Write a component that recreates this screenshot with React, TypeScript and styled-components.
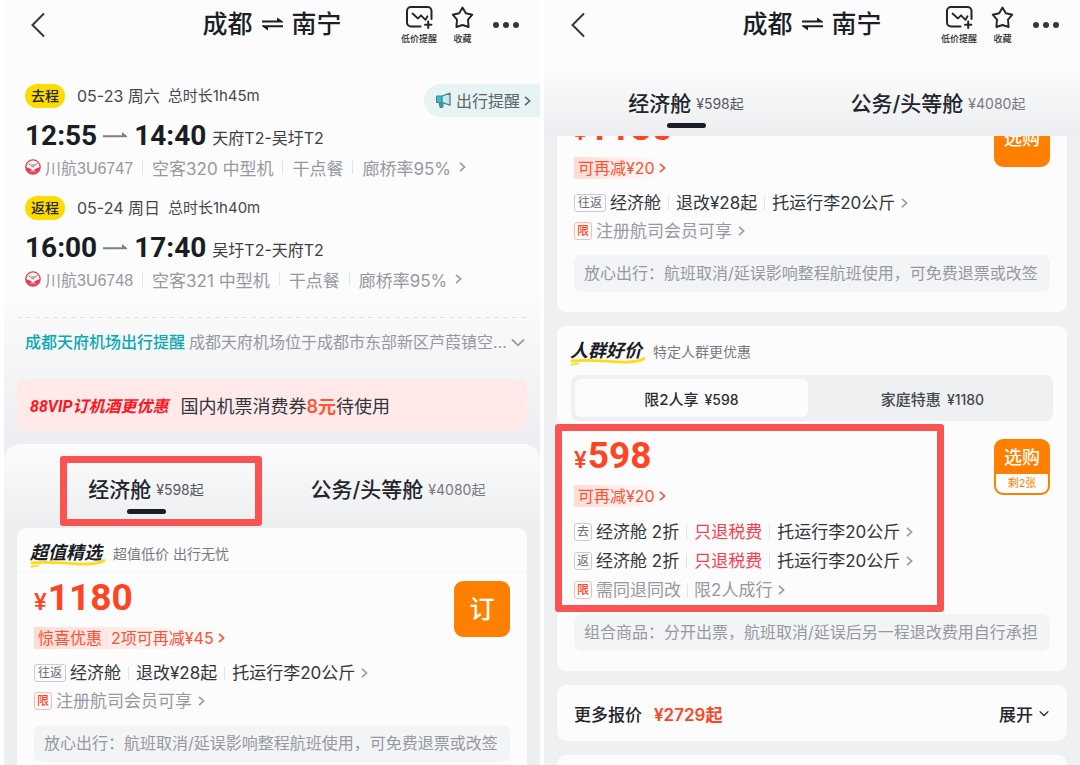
import React from 'react';
import styled, { createGlobalStyle, css } from 'styled-components';

const cjk = '"Noto Sans CJK SC", sans-serif';
const inter = `Inter, ${cjk}`;
const arial = `"Liberation Sans", ${cjk}`;
const roboto = `Roboto, ${cjk}`;

const GlobalStyle = createGlobalStyle`
  *, *::before, *::after { box-sizing: border-box; }
  body { margin: 0; background: #fff; font-family: ${inter}; color: #22252c; }
  button { font: inherit; color: inherit; background: none; border: 0; padding: 0; cursor: pointer; }
  h1, h2, p { margin: 0; font-weight: inherit; }
  svg { display: block; flex: none; }
`;

const Page = styled.main`
  display: grid;
  grid-template-columns: 1fr 1fr;
  height: 100vh;
  overflow: hidden;
`;

const Screen = styled.section<{ $tone: 'detail' | 'list' }>`
  position: relative;
  display: flex;
  flex-direction: column;
  min-width: 0;
  overflow: hidden;
  border-left: 4px solid #fff;
  background: ${(p) =>
    p.$tone === 'detail' ? 'linear-gradient(#fcfcfc 0, #fcfcfc 290px, #eceef1 440px)' : '#eef0f2'};
`;

/* ---------- header ---------- */

const Header = styled.header`
  display: grid;
  grid-template-columns: 1fr auto 1fr;
  align-items: center;
  height: 48px;
  flex: none;
  padding: 0 20px;
`;

const BackButton = styled.button`
  justify-self: start;
  padding: 2px 6px 0;
`;

const Title = styled.h1`
  display: flex;
  align-items: center;
  gap: 9px;
  font-size: 25px;
  line-height: 36px;
  font-weight: 500;
  color: #1c1f28;
`;

const Actions = styled.div`
  display: flex;
  justify-content: flex-end;
  align-items: center;
  gap: 14px;
`;

const MoreButton = styled.button`
  padding: 2px 0 0 4px;
`;

const Action = styled.button`
  display: flex;
  flex-direction: column;
  align-items: center;
  gap: 4px;
  padding-top: 2px;
  font-size: 9px;
  line-height: 12px;
  font-weight: 500;
  color: #2a2d33;
  white-space: nowrap;
`;

/* ---------- flight legs ---------- */

const Legs = styled.div`
  display: flex;
  flex-direction: column;
  gap: 17px;
  padding: 36px 0 26px 21px;
`;

const LegHead = styled.div`
  display: flex;
  align-items: flex-start;
  height: 24px;
  margin-bottom: 9px;
  font-size: 16px;
  line-height: 24px;
  color: #45484e;
`;

const LegTag = styled.span`
  width: 40px;
  margin-right: 12px;
  border-radius: 12px;
  background: #ffdb00;
  color: #22252c;
  font-size: 14px;
  font-weight: 500;
  text-align: center;
`;

const Duration = styled.span`
  margin-left: 8px;
  font-size: 15px;
`;

const RemindPill = styled.button`
  display: flex;
  align-items: center;
  gap: 4px;
  height: 33px;
  margin-left: auto;
  padding: 0 9px 0 11px;
  border-radius: 17px 0 0 17px;
  background: #e6f4f4;
  color: #59666c;
`;

const Times = styled.div`
  display: flex;
  align-items: center;
  height: 36px;
  font-family: ${roboto};
  font-size: 28px;
  font-weight: 700;
  color: #1a1d26;
  svg { margin: 0 6px; }
`;

const Airports = styled.span`
  margin: 4px 0 0 6px;
  font-family: ${inter};
  font-size: 16px;
  font-weight: 400;
  color: #3c3f46;
`;

const LegInfo = styled.button`
  display: flex;
  align-items: center;
  height: 22px;
  margin-top: 3px;
  margin-bottom: 1px;
  font-size: 17px;
  color: #96999f;
  white-space: nowrap;
  svg:last-child { margin-left: 8px; }
`;

const FlightNo = styled.span`
  margin-left: 4px;
  font-family: ${arial};
  font-size: 16px;
`;

const Bar = styled.i<{ $gap?: number }>`
  width: 1px;
  height: 14px;
  margin: 0 ${(p) => p.$gap ?? 8}px;
  background: #e2e4e7;
`;

const Notice = styled.button`
  display: flex;
  align-items: center;
  margin: 0 13px;
  padding: 13px 2px 25px 8px;
  font-size: 16px;
  line-height: 24px;
  color: #96999f;
  white-space: nowrap;
  background: repeating-linear-gradient(90deg, #dfe1e4 0 5px, transparent 5px 9px) top / 100% 1px no-repeat;
  strong { margin-right: 4px; font-weight: 500; color: #0ba9b0; }
  svg { margin-left: auto; }
`;

const Coupon = styled.button`
  display: flex;
  align-items: center;
  gap: 12px;
  height: 52px;
  margin: 0 13px 13px;
  padding: 0 13px;
  border-radius: 8px;
  background: #ffe9e9;
  font-size: 18px;
  color: #33363c;
  em { font-family: ${roboto}; font-size: 16px; font-weight: 700; color: #ff1420; }
  b { color: #ff5533; font-weight: 600; }
`;

/* ---------- cabin tabs ---------- */

const Sheet = styled.div`
  flex: 1;
  min-height: 0;
  border-radius: 16px 16px 0 0;
  background: linear-gradient(#fcfcfc 0, #eceef0 84px);
`;

const Tabs = styled.nav<{ $docked?: boolean }>`
  display: grid;
  grid-template-columns: 1fr 1fr;
  padding: ${(p) => (p.$docked ? '0 16px 8px' : '31px 16px 14px')};
`;

const DockedHead = styled.div`
  flex: none;
  background: linear-gradient(#fcfcfc 0, #fbfbfb 70px, #eceef1 136px);
  ${Tabs} { margin-top: 41px; }
`;

const Tab = styled.button<{ $active?: boolean }>`
  display: flex;
  flex-direction: column;
  align-items: center;
  gap: 4px;
  font-size: 21px;
  font-weight: 500;
  color: #22252c;
  span { display: flex; align-items: center; gap: 5px; height: 30px; line-height: 30px; }
  small { font-size: 14px; font-weight: 400; color: ${(p) => (p.$active ? '#55585f' : '#777a80')}; }
  &::after {
    content: '';
    width: 39px;
    height: 5px;
    border-radius: 3px;
    background: ${(p) => (p.$active ? '#1a1d26' : 'transparent')};
  }
`;

/* ---------- offer cards ---------- */

const Scroller = styled.div`
  display: flex;
  flex-direction: column;
  gap: 14px;
  flex: 1;
  min-height: 0;
  overflow: hidden;
`;

const Card = styled.article<{ $scrolled?: boolean }>`
  flex: none;
  margin: ${(p) => (p.$scrolled ? '-34px' : '0')} 13px 0;
  padding-bottom: 20px;
  border-radius: 9px;
  background: #fcfcfd;
`;

const CardHead = styled.div<{ $line?: boolean }>`
  display: flex;
  align-items: center;
  gap: 8px;
  height: 44px;
  padding: 7px 13px 0;
  border-bottom: 1px solid ${(p) => (p.$line ? '#f7f7f8' : 'transparent')};
  font-size: 14px;
  color: #777a80;
`;

const Brand = styled.h2`
  position: relative;
  width: 75px;
  font-size: 18px;
  line-height: 26px;
  font-weight: 700;
  font-style: italic;
  color: #1a1d26;
  white-space: nowrap;
  svg { position: absolute; left: 0; bottom: -2px; }
  span { position: relative; }
`;

const Segments = styled.div`
  display: grid;
  grid-template-columns: 1fr 1fr;
  gap: 8px;
  height: 46px;
  margin: 5px 14px 9px;
  padding: 4px;
  border-radius: 8px;
  background: #eef0f2;
`;

const Segment = styled.button<{ $active?: boolean }>`
  border-radius: 6px;
  background: ${(p) => (p.$active ? '#fcfcfd' : 'transparent')};
  font-size: 15px;
  font-weight: 500;
  color: ${(p) => (p.$active ? '#2a2d33' : '#45484e')};
  small { margin-left: 6px; font-size: 14px; }
`;

const Offer = styled.div`
  display: flex;
  justify-content: space-between;
  align-items: flex-start;
  padding: 6px 17px 0;
`;

const OfferBody = styled.div`
  display: flex;
  flex-direction: column;
  align-items: flex-start;
`;

const Price = styled.div`
  display: flex;
  align-items: baseline;
  height: 40px;
  line-height: 40px;
  font-family: ${roboto};
  font-size: 37px;
  font-weight: 700;
  color: #ff4422;
  small { margin-right: 1px; font-size: 24px; font-weight: 500; }
`;

const Saving = styled.button`
  display: flex;
  align-items: center;
  height: 22px;
  margin: 9px 0 10px;
  padding-left: 4px;
  background: linear-gradient(90deg, #ffdcd6, #fff3f1 65%, #fcfcfd);
  font-size: 16px;
  line-height: 22px;
  color: #ff5033;
  svg { margin-left: 4px; }
`;

const Line = styled.button<{ $roomy?: boolean; $muted?: boolean }>`
  display: flex;
  align-items: center;
  height: ${(p) => (p.$roomy ? 29 : 28)}px;
  font-size: 17px;
  line-height: 26px;
  color: ${(p) => (p.$muted ? '#96999f' : '#33363c')};
  white-space: nowrap;
  svg { margin-left: 6px; }
`;

const Chip = styled.span<{ $red?: boolean }>`
  display: flex;
  align-items: center;
  justify-content: center;
  height: 18px;
  min-width: 17px;
  margin-right: 4px;
  padding: 0 2px;
  border: 1px solid #c9ccd0;
  border-radius: 3px;
  font-size: 12px;
  color: #6a6d73;
  ${(p) =>
    p.$red &&
    css`
      border-color: #ffb9ad;
      color: #ff4422;
      font-weight: 500;
    `}
`;

const Pair = styled.span`
  padding: 0 1px;
`;

const Refund = styled.span`
  color: #ff3b4e;
`;

const Buy = styled.button`
  display: flex;
  flex-direction: column;
  align-items: stretch;
  width: 56px;
  height: 56px;
  margin-top: 3px;
  overflow: hidden;
  border: 2px solid #ff8000;
  border-radius: 9px;
  background: #ff8000;
  color: #fff;
`;

const BuyLabel = styled.span<{ $size: number }>`
  flex: 1;
  display: flex;
  align-items: center;
  justify-content: center;
  font-size: ${(p) => p.$size}px;
  line-height: 30px;
  font-weight: 500;
`;

const Stock = styled.span`
  height: 19px;
  border-radius: 0 0 6px 6px;
  background: #fff;
  color: #ff8000;
  font-size: 11px;
  line-height: 18px;
`;

const Note = styled.p`
  margin: 10px 17px 0;
  padding: 0 10px;
  border-radius: 8px;
  background: #f3f4f6;
  font-size: 16px;
  line-height: 37px;
  color: #96999f;
  white-space: nowrap;
  overflow: hidden;
`;

const MoreCard = styled(Card)`
  display: flex;
  align-items: center;
  height: 56px;
  padding: 0 18px 0 17px;
  font-size: 17px;
  font-weight: 500;
  b { margin-left: 12px; font-weight: 600; color: #ff4422; }
`;

const Expand = styled.button`
  display: flex;
  align-items: center;
  gap: 6px;
  margin-left: auto;
`;

const Highlight = styled.div<{ $x: number; $y: number; $w: number; $h: number }>`
  position: absolute;
  left: ${(p) => p.$x}px;
  top: ${(p) => p.$y}px;
  width: ${(p) => p.$w}px;
  height: ${(p) => p.$h}px;
  border: 7px solid #fb5252;
  border-radius: 3px;
  pointer-events: none;
`;

/* ---------- icons ---------- */

const Chevron = ({ color = '#96999f' }: { color?: string }) => (
  <svg width="7" height="12" viewBox="0 0 7 12" fill="none" stroke={color} strokeWidth="1.6">
    <path d="M1 1.8 5.6 6 1 10.2" />
  </svg>
);

const Down = ({ w = 14, color = '#96999f' }: { w?: number; color?: string }) => (
  <svg width={w} height={w / 2 + 2} viewBox="0 0 14 9" fill="none" stroke={color} strokeWidth="1.8">
    <path d="M1 1.5 7 7.3 13 1.5" />
  </svg>
);

const Back = () => (
  <svg width="16" height="26" viewBox="0 0 16 26" fill="none" stroke="#33363c" strokeWidth="2">
    <path d="M14 1.5 2.500 13 14 24.5" />
  </svg>
);

const RoundTrip = () => (
  <svg width="21" height="14" viewBox="0 0 21 14" fill="#1c1f28">
    <path d="M0 3.6h15V.4L21 4.6v1H0zM21 8.2v2H6v3.200L0 9.200v-1z" />
  </svg>
);

const OneWay = () => (
  <svg width="25" height="8" viewBox="0 0 25 8" fill="#7d8087">
    <path d="M0 4.2h19V1L24 5v1.2H0z" />
  </svg>
);

const PriceAlert = () => (
  <svg width="28" height="23" viewBox="0 0 28 23" fill="none" stroke="#22252c" strokeWidth="2" strokeLinecap="round">
    <path d="M15.500 20.500H6A4 4 0 0 1 2 16.500V5a4 4 0 0 1 4-4h16.500a4 4 0 0 1 4 4v8" />
    <path d="M7.500 7.500 13 12.500l3-3.200 4.500 4.500 2-3.500" strokeWidth="1.800" strokeLinejoin="round" />
    <path d="M23.200 15.500v6.400M20 18.700h6.400" />
  </svg>
);

const Star = () => (
  <svg width="23" height="23" viewBox="0 0 23 23" fill="none" stroke="#22252c" strokeWidth="1.900" strokeLinejoin="round">
    <path d="M11.500 1.600l3.300 5.600 6.500 1.500-4.300 5 .6 7.300-6.100-2-6.100 2 .6-7.300-4.300-5 6.500-1.500z" />
  </svg>
);

const Dots = () => (
  <svg width="28" height="8" viewBox="0 0 28 8" fill="#33363c">
    <circle cx="4" cy="4" r="3" />
    <circle cx="14" cy="4" r="3" />
    <circle cx="24" cy="4" r="3" />
  </svg>
);

const Horn = () => (
  <svg width="17" height="17" viewBox="0 0 17 17" strokeLinejoin="round">
    <path d="M4 9.500h4.500l-.8 6H5z" fill="#2aa5b4" stroke="#4d7f88" />
    <path d="M1.500 4H7v6.500H1.500z" fill="#35c3d3" stroke="#4d7f88" />
    <path d="M7 4l8-2.800v12L7 10.500z" fill="#b8eef2" stroke="#5d7c84" strokeWidth="1.300" />
  </svg>
);

const Airline = () => (
  <svg width="16" height="16" viewBox="0 0 16 16">
    <circle cx="8" cy="8" r="7.200" fill="#fff" stroke="#dd4155" strokeWidth="1.300" />
    <path d="M1 8.200c2.200.2 4.600 1.600 7 3.300 2.400-1.700 4.800-3.100 7-3.300A7 7 0 0 1 8 15 7 7 0 0 1 1 8.200z" fill="#dd4155" />
    <path d="M3.500 4.500 8 8.200l4.800-4.300M6.500 5l1.600 1.300 1.600-1.300M6.200 12.500 8 11l1.800 1.500" fill="none" stroke="#dd4155" />
    <path d="M5.500 12.600 8 11.500l2.500 1.100" fill="none" stroke="#fff" strokeWidth=".8" />
  </svg>
);

const Brush = () => (
  <svg width="76" height="9" viewBox="0 0 76 9" fill="none" stroke="#ffdb1a" strokeLinecap="round">
    <path d="M2 4C20 1.500 42 5.500 58 5 66 4.700 71 3.500 74 1.500" strokeWidth="2.800" />
    <path d="M1.500 7.800C4 6.600 6 6.600 8.500 6.800" strokeWidth="1.700" />
  </svg>
);

/* ---------- composed parts ---------- */

const TopBar = () => (
  <Header>
    <BackButton aria-label="返回"><Back /></BackButton>
    <Title>成都<RoundTrip />南宁</Title>
    <Actions>
      <Action><PriceAlert />低价提醒</Action>
      <Action><Star />收藏</Action>
      <MoreButton aria-label="更多"><Dots /></MoreButton>
    </Actions>
  </Header>
);

const CabinTabs = ({ docked }: { docked?: boolean }) => (
  <Tabs $docked={docked}>
    <Tab $active><span>经济舱<small>¥598起</small></span></Tab>
    <Tab><span>公务/头等舱<small>¥4080起</small></span></Tab>
  </Tabs>
);

type LegProps = {
  tag: string; date: string; total: string; from: string; to: string;
  airports: string; no: string; plane: string; remind?: boolean;
};

const Leg = (p: LegProps) => (
  <div>
    <LegHead>
      <LegTag>{p.tag}</LegTag>
      <span>{p.date}</span>
      <Duration>{p.total}</Duration>
      {p.remind && <RemindPill><Horn />出行提醒<Chevron color="#59666c" /></RemindPill>}
    </LegHead>
    <Times>
      {p.from}<OneWay />{p.to}
      <Airports>{p.airports}</Airports>
    </Times>
    <LegInfo>
      <Airline /><FlightNo>{p.no}</FlightNo><Bar $gap={9} />
      {p.plane}<Bar $gap={9} />干点餐<Bar $gap={9} />廊桥率95%
      <Chevron />
    </LegInfo>
  </div>
);

const RoundTripLines = () => (
  <>
    <Line>
      <Chip><Pair>往返</Pair></Chip>经济舱<Bar $gap={7} />退改¥28起<Bar $gap={7} />托运行李20公斤<Chevron />
    </Line>
    <Line $muted><Chip $red>限</Chip>注册航司会员可享<Chevron /></Line>
  </>
);

const SplitLine = ({ way }: { way: string }) => (
  <Line $roomy>
    <Chip>{way}</Chip>经济舱 2折<Bar $gap={7} /><Refund>只退税费</Refund><Bar $gap={7} />托运行李20公斤<Chevron />
  </Line>
);

const FREE_REFUND = '放心出行：航班取消/延误影响整程航班使用，可免费退票或改签';

export default function App() {
  return (
    <>
      <GlobalStyle />
      <Page>
        <Screen $tone="detail">
          <TopBar />
          <Legs>
            <Leg tag="去程" date="05-23 周六" total="总时长1h45m" from="12:55" to="14:40"
              airports="天府T2-吴圩T2" no="川航3U6747" plane="空客320 中型机" remind />
            <Leg tag="返程" date="05-24 周日" total="总时长1h40m" from="16:00" to="17:40"
              airports="吴圩T2-天府T2" no="川航3U6748" plane="空客321 中型机" />
          </Legs>
          <Notice>
            <strong>成都天府机场出行提醒</strong>成都天府机场位于成都市东部新区芦葭镇空...
            <Down />
          </Notice>
          <Coupon>
            <em>88VIP订机酒更优惠</em>
            <span>国内机票消费券<b>8元</b>待使用</span>
          </Coupon>
          <Sheet>
            <CabinTabs />
            <Card>
              <CardHead $line><Brand><Brush /><span>超值精选</span></Brand>超值低价 出行无忧</CardHead>
              <Offer>
                <OfferBody>
                  <Price><small>¥</small>1180</Price>
                  <Saving>惊喜优惠<Bar $gap={4} />2项可再减¥45<Chevron color="#ff5033" /></Saving>
                  <RoundTripLines />
                </OfferBody>
                <Buy><BuyLabel $size={25}>订</BuyLabel></Buy>
              </Offer>
              <Note>{FREE_REFUND}</Note>
            </Card>
          </Sheet>
          <Highlight $x={56} $y={456} $w={202} $h={70} />
        </Screen>

        <Screen $tone="list">
          <DockedHead>
            <TopBar />
            <CabinTabs docked />
          </DockedHead>
          <Scroller>
            <Card $scrolled>
              <Offer>
                <OfferBody>
                  <Price><small>¥</small>1180</Price>
                  <Saving>可再减¥20<Chevron color="#ff5033" /></Saving>
                  <RoundTripLines />
                </OfferBody>
                <Buy><BuyLabel $size={18}>选购</BuyLabel></Buy>
              </Offer>
              <Note>{FREE_REFUND}</Note>
            </Card>
            <Card>
              <CardHead><Brand><Brush /><span>人群好价</span></Brand>特定人群更优惠</CardHead>
              <Segments>
                <Segment $active>限2人享<small>¥598</small></Segment>
                <Segment>家庭特惠<small>¥1180</small></Segment>
              </Segments>
              <Offer>
                <OfferBody>
                  <Price><small>¥</small>598</Price>
                  <Saving>可再减¥20<Chevron color="#ff5033" /></Saving>
                  <SplitLine way="去" />
                  <SplitLine way="返" />
                  <Line $roomy $muted><Chip $red>限</Chip>需同退同改<Bar $gap={6} />限2人成行<Chevron /></Line>
                </OfferBody>
                <Buy><BuyLabel $size={18}>选购</BuyLabel><Stock>剩2张</Stock></Buy>
              </Offer>
              <Note>组合商品：分开出票，航班取消/延误后另一程退改费用自行承担</Note>
            </Card>
            <MoreCard>
              更多报价<b>¥2729起</b>
              <Expand>展开<Down w={10} color="#22252c" /></Expand>
            </MoreCard>
            <Card />
          </Scroller>
          <Highlight $x={11} $y={424} $w={389} $h={188} />
        </Screen>
      </Page>
    </>
  );
}
